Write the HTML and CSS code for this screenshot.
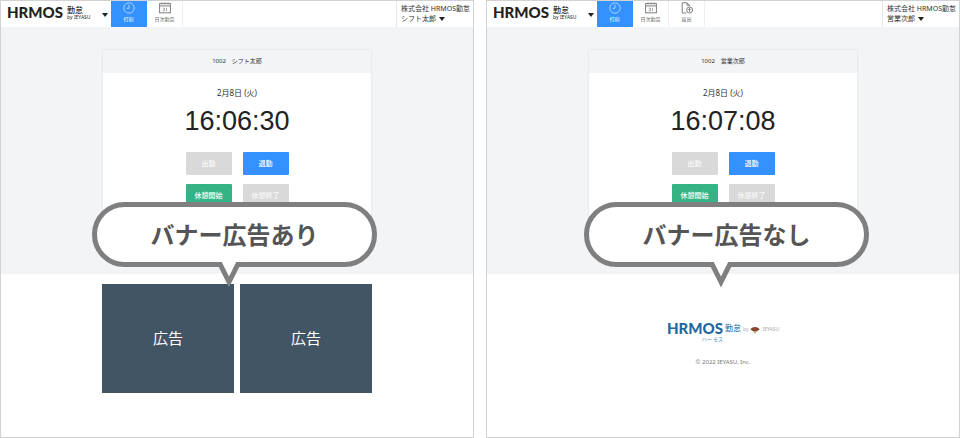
FILE: index.html
```html
<!DOCTYPE html>
<html lang="ja">
  <head>
    <meta charset="UTF-8" />
    <meta name="viewport" content="width=device-width, initial-scale=1.0" />
    <link rel="stylesheet" href="styles.css">
    <title>HRMOS勤怠</title>
  </head>

  <body>
    <svg class="sprite" aria-hidden="true">
      <symbol id="icon-clock" viewBox="0 0 12 12">
        <circle cx="6" cy="6" r="5.2" />
        <path d="M6 2.8V6.3H3.6" />
      </symbol>
      <symbol id="icon-calendar" viewBox="0 0 12 12">
        <rect x="0.6" y="1.6" width="10.8" height="9.2" />
        <path d="M0.6 3.9H11.4M3 0.4V2.4M6 0.4V2.4M9 0.4V2.4" />
        <path d="M3.6 6.2H5.4V8.8H3.6M7.6 5.8V9.2" stroke-width="0.7" />
      </symbol>
      <symbol id="icon-apply" viewBox="0 0 12 12">
        <path d="M5.4 11H1.2V0.8H6L8.4 3.2V4.4M6 0.8V3.2H8.4" />
        <circle cx="8.6" cy="8" r="3" />
        <path d="M8.6 9.8V6.4M7.3 7.7L8.6 6.4L9.9 7.7" />
      </symbol>
      <symbol id="callout-tail" viewBox="0 0 24 26">
        <path d="M2 0L12 20L22 0" fill="#fff" stroke="#7f7f7f" stroke-width="5" />
      </symbol>
    </svg>

    <main class="compare">
      <section class="screen">
        <header class="header">
          <a href="#" class="logo">
            <span class="logo__name">HRMOS</span>
            <span class="logo__sub">勤怠<small class="logo__by">by IEYASU</small></span>
          </a>
          <button type="button" class="caret" aria-label="メニュー"></button>
          <nav class="nav">
            <a href="#" class="nav__item nav__item--active">
              <svg class="nav__icon"><use href="#icon-clock" /></svg>
              打刻
            </a>
            <a href="#" class="nav__item">
              <svg class="nav__icon"><use href="#icon-calendar" /></svg>
              日次勤怠
            </a>
          </nav>
          <div class="user">
            <div>株式会社 HRMOS勤怠</div>
            <button type="button" class="user__name">シフト太郎 <i class="arrow"></i></button>
          </div>
        </header>
        <div class="stage">
          <div class="card">
            <div class="card__head">1002　シフト太郎</div>
            <div class="card__date">2月8日 (火)</div>
            <div class="card__time">16:06:30</div>
            <div class="punch">
              <button type="button" class="btn" disabled>出勤</button>
              <button type="button" class="btn btn--blue">退勤</button>
              <button type="button" class="btn btn--green">休憩開始</button>
              <button type="button" class="btn" disabled>休憩終了</button>
            </div>
          </div>
        </div>
        <footer class="ads">
          <a href="#" class="ads__item">広告</a>
          <a href="#" class="ads__item">広告</a>
        </footer>
        <div class="callout">
          バナー広告あり
          <svg class="callout__tail"><use href="#callout-tail" /></svg>
        </div>
      </section>

      <section class="screen">
        <header class="header">
          <a href="#" class="logo">
            <span class="logo__name">HRMOS</span>
            <span class="logo__sub">勤怠<small class="logo__by">by IEYASU</small></span>
          </a>
          <button type="button" class="caret" aria-label="メニュー"></button>
          <nav class="nav">
            <a href="#" class="nav__item nav__item--active">
              <svg class="nav__icon"><use href="#icon-clock" /></svg>
              打刻
            </a>
            <a href="#" class="nav__item">
              <svg class="nav__icon"><use href="#icon-calendar" /></svg>
              日次勤怠
            </a>
            <a href="#" class="nav__item">
              <svg class="nav__icon"><use href="#icon-apply" /></svg>
              届出
            </a>
          </nav>
          <div class="user">
            <div>株式会社 HRMOS勤怠</div>
            <button type="button" class="user__name">営業次郎 <i class="arrow"></i></button>
          </div>
        </header>
        <div class="stage">
          <div class="card">
            <div class="card__head">1002　営業次郎</div>
            <div class="card__date">2月8日 (火)</div>
            <div class="card__time">16:07:08</div>
            <div class="punch">
              <button type="button" class="btn" disabled>出勤</button>
              <button type="button" class="btn btn--blue">退勤</button>
              <button type="button" class="btn btn--green">休憩開始</button>
              <button type="button" class="btn" disabled>休憩終了</button>
            </div>
          </div>
        </div>
        <footer class="credit">
          <a href="#" class="brand">
            <span class="brand__main">
              <span class="brand__name">HRMOS</span>
              <span class="brand__ruby">ハー モス</span>
            </span>
            <span class="brand__sub">勤怠</span>
            <span class="brand__by">by</span>
            <svg class="brand__fan" viewBox="0 0 10 8">
              <path d="M0.4 3.6C1.6 0 8.4 0 9.6 3.6L6.4 5.4H3.6Z" fill="#7a4a30" />
              <path d="M3.6 5.4H6.4L5 7.6Z" fill="#c98a4a" />
              <circle cx="5" cy="3.4" r="1.1" fill="#c0392b" />
            </svg>
            <span class="brand__by">IEYASU</span>
          </a>
          <p class="copyright">© 2022 IEYASU, Inc.</p>
        </footer>
        <div class="callout callout--right">
          バナー広告なし
          <svg class="callout__tail"><use href="#callout-tail" /></svg>
        </div>
      </section>
    </main>
  </body>
</html>
```

FILE: styles.css
```css
* {
  box-sizing: border-box;
}
body {
  margin: 0;
  background: #fff;
  color: #333;
  font-family: "Noto Sans", "Noto Sans CJK JP", sans-serif;
  font-size: 8px;
  line-height: 10px;
}
a {
  color: inherit;
  text-decoration: none;
}
button {
  padding: 0;
  border: 0;
  background: none;
  color: inherit;
  font: inherit;
}
.sprite {
  display: none;
}
.compare {
  display: grid;
  grid-template-columns: 1fr 1fr;
  gap: 12px;
  min-height: 100vh;
}
.screen {
  position: relative;
  border: 1px solid #d2d2d2;
}

/* header */
.header {
  display: flex;
  height: 26px;
}
.logo {
  display: flex;
  align-items: center;
  width: 98px;
  padding: 0 0 4px 6px;
  gap: 4px;
  color: #222;
}
.logo__name {
  font: 900 15px/16px Lato, sans-serif;
}
.logo__sub {
  display: flex;
  flex-direction: column;
  padding-top: 2px;
  font-weight: 500;
  line-height: 9px;
}
.logo__by {
  font-size: 5px;
  font-weight: 400;
  line-height: 7px;
  white-space: nowrap;
}
.caret {
  width: 12px;
}
.caret::before,
.arrow {
  content: "";
  display: inline-block;
  border: 3px solid transparent;
  border-top: 4px solid #222;
  border-bottom: 0;
}
.arrow {
  margin-left: 1px;
}
.nav {
  display: flex;
}
.nav__item {
  display: flex;
  flex-direction: column;
  align-items: center;
  width: 36px;
  padding-top: 1px;
  gap: 2px;
  border-right: 1px solid #eee;
  color: #666;
  font-size: 5px;
  line-height: 7px;
  white-space: nowrap;
}
.nav__item--active {
  border-color: #3392ff;
  background: #3392ff;
  color: #fff;
}
.nav__icon {
  width: 12px;
  height: 12px;
  fill: none;
  stroke: #808080;
  stroke-width: 1;
}
.nav__item--active .nav__icon {
  stroke: #a9d0ff;
}
.user {
  width: 77px;
  margin-left: auto;
  padding: 3px 0 0 4px;
  border-left: 1px solid #e8e8e8;
  font-size: 7px;
  white-space: nowrap;
}
.user__name {
  display: block;
}

/* time clock */
.stage {
  height: 247px;
  padding-top: 23px;
  background: #f3f4f6;
}
.card {
  width: 268px;
  margin: 0 auto;
  padding-bottom: 30px;
  background: #fff;
  box-shadow: 0 0 2px #d8dade;
  text-align: center;
}
.card__head {
  background: #f3f4f6;
  font-size: 6px;
  line-height: 23px;
}
.card__date {
  padding-top: 14px;
  font-size: 8px;
  line-height: 12px;
}
.card__time {
  padding-top: 6px;
  color: #222;
  font: 27px/32px "Liberation Sans", Arial, sans-serif;
}
.punch {
  display: grid;
  grid-template-columns: 46px 46px;
  justify-content: center;
  gap: 9px 11px;
  padding-top: 15px;
}
.btn {
  height: 23px;
  border-radius: 1px;
  background: #d9d9d9;
  color: #f8f8f8;
  font-size: 7px;
  font-weight: 500;
}
.btn--blue {
  background: #3392ff;
  color: #fff;
}
.btn--green {
  background: #36b384;
  color: #fff;
}

/* below the stage */
.ads {
  display: grid;
  grid-template-columns: 132px 132px;
  justify-content: center;
  gap: 6px;
  padding-top: 10px;
}
.ads__item {
  background: #415565;
  color: #fff;
  font-size: 15px;
  line-height: 109px;
  text-align: center;
}
.credit {
  display: flex;
  flex-direction: column;
  align-items: center;
  padding-top: 46px;
  color: #777;
}
.brand {
  display: flex;
  gap: 2px;
}
.brand__main {
  display: flex;
  flex-direction: column;
}
.brand__name {
  color: #1f67a0;
  font: 900 15px/16px Lato, sans-serif;
}
.brand__ruby {
  align-self: flex-end;
  color: #4d8fc0;
  font-size: 5px;
  line-height: 7px;
}
.brand__sub {
  color: #3a7cb0;
  font-size: 8px;
  font-weight: 500;
  line-height: 16px;
}
.brand__by {
  color: #aaa;
  font-size: 5px;
  line-height: 18px;
}
.brand__fan {
  width: 10px;
  height: 8px;
  margin-top: 6px;
}
.copyright {
  margin: 14px 0 0;
  font-size: 6px;
}

/* speech bubble over each screen */
.callout {
  position: absolute;
  top: 201px;
  left: calc(50% - 145px);
  width: 285px;
  border: 5px solid #7f7f7f;
  border-radius: 33px;
  background: #fff;
  color: #555;
  font-size: 24px;
  font-weight: 700;
  line-height: 55px;
  text-align: center;
}
.callout--right {
  left: calc(50% - 139px);
}
.callout__tail {
  position: absolute;
  top: 55px;
  left: 120px;
  width: 24px;
  height: 26px;
}
```
